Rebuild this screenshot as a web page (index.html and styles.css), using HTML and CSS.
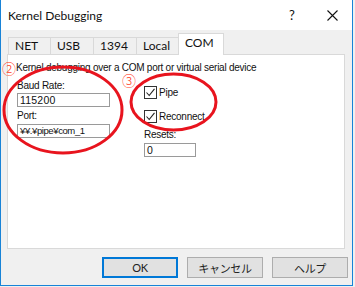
FILE: index.html
```html
<!DOCTYPE html>
<html lang="ja">
<head>
  <meta charset="UTF-8">
  <title>Kernel Debugging</title>
  <link rel="stylesheet" href="styles.css">
</head>
<body>
  <div class="window">
    <div class="titlebar">
      <span class="title">Kernel Debugging</span>
      <span class="cap-btn">?</span>
      <span class="cap-btn">
        <svg width="11" height="11" viewBox="0 0 11 11"><path d="M0.5 0.5 L10.5 10.5 M10.5 0.5 L0.5 10.5" stroke="#111" stroke-width="1.1" fill="none"/></svg>
      </span>
    </div>

    <div class="client">
      <div class="tabs">
        <div class="tab">NET</div>
        <div class="tab">USB</div>
        <div class="tab">1394</div>
        <div class="tab narrow">Local</div>
        <div class="tab active">COM</div>
      </div>

      <div class="panel">
        <p class="desc">Kernel debugging over a COM port or virtual serial device</p>
        <div class="fields">
          <div class="col col-left">
            <div class="label">Baud Rate:</div>
            <div class="edit">115200</div>
            <div class="label port">Port:</div>
            <div class="edit path">¥¥.¥pipe¥com_1</div>
          </div>
          <div class="col col-right">
            <div class="check">
              <span class="box"><svg width="11" height="11" viewBox="0 0 11 11"><path d="M1.5 5.5 L4.2 8.5 L9.5 1.8" stroke="#222" stroke-width="1.1" fill="none"/></svg></span>
              Pipe
            </div>
            <div class="check">
              <span class="box"><svg width="11" height="11" viewBox="0 0 11 11"><path d="M1.5 5.5 L4.2 8.5 L9.5 1.8" stroke="#222" stroke-width="1.1" fill="none"/></svg></span>
              Reconnect
            </div>
            <div class="label resets">Resets:</div>
            <div class="edit small">0</div>
          </div>
        </div>
      </div>

      <div class="buttons">
        <button class="btn default">OK</button>
        <button class="btn">キャンセル</button>
        <button class="btn">ヘルプ</button>
      </div>
    </div>

    <!-- hand drawn annotations -->
    <svg class="marks" width="353" height="286" viewBox="0 0 353 286">
      <ellipse cx="62" cy="110" rx="59" ry="43" fill="none" stroke="#e8141e" stroke-width="3"/>
      <ellipse cx="172.5" cy="102" rx="42.5" ry="28" fill="none" stroke="#e8141e" stroke-width="3"/>
    </svg>
    <span class="num num-2">②</span>
    <span class="num num-3">③</span>
  </div>
</body>
</html>
```

FILE: styles.css
```css
* {
  box-sizing: border-box;
}

body {
  margin: 0;
  background-color: #f0f0f0;
  font-family: 'Lato', sans-serif;
}

.window {
  position: relative;
  width: 353px;
  height: 286px;
  border: 1px solid #1883d7;
  border-top: none;
  background-color: #f0f0f0;
}

.titlebar {
  display: flex;
  align-items: center;
  height: 30px;
  padding-left: 7px;
  background-color: #ffffff;
  color: #111;
  font-size: 12px;
}

.title {
  flex: 1;
}

.cap-btn {
  display: flex;
  justify-content: center;
  align-items: center;
  width: 40px;
  height: 30px;
  font-size: 13px;
}

.client {
  height: 255px;
  padding-top: 3px;
}

.tabs {
  display: flex;
  align-items: flex-end;
  margin-left: 7px;
  height: 21px;
}

.tab {
  width: 43px;
  height: 17px;
  padding-left: 6px;
  border: 1px solid #d9d9d9;
  border-left: none;
  border-bottom: none;
  font-size: 12px;
  line-height: 16px;
  color: #111;
}

.tab:first-child {
  border-left: 1px solid #d9d9d9;
}

.tab.narrow {
  width: 42px;
}

.tab.active {
  position: relative;
  z-index: 1;
  width: 46px;
  height: 22px;
  margin-left: -1px;
  margin-bottom: -1px;
  border-left: 1px solid #d9d9d9;
  background-color: #ffffff;
  line-height: 17px;
}

.panel {
  width: 338px;
  height: 195px;
  margin-left: 6px;
  padding: 7px 0 0 8px;
  border: 1px solid #d9d9d9;
  background-color: #ffffff;
  font-family: 'Liberation Sans', sans-serif;
  font-size: 10px;
  letter-spacing: -0.25px;
  color: #111;
}

.desc {
  margin: 0;
  line-height: 12px;
}

.fields {
  display: flex;
  gap: 34px;
  margin-left: 1px;
}

.col-left {
  width: 93px;
  padding-top: 6px;
}

.col-right {
  padding-top: 12px;
}

.label {
  line-height: 12px;
  margin-bottom: 1px;
}

.label.port {
  margin-top: 3px;
  margin-bottom: 2px;
}

.edit {
  height: 14px;
  padding-left: 2px;
  border: 1px solid #9a9a9a;
  font-size: 10.5px;
  line-height: 12px;
  letter-spacing: 0.2px;
  white-space: nowrap;
  overflow: hidden;
}

.edit.path {
  font-size: 9.5px;
  letter-spacing: -0.4px;
}

.edit.small {
  width: 52px;
}

.check {
  display: flex;
  align-items: center;
  height: 13px;
  margin-bottom: 11px;
}

.box {
  display: flex;
  justify-content: center;
  align-items: center;
  width: 13px;
  height: 13px;
  margin-right: 2px;
  border: 1px solid #333;
}

.label.resets {
  margin-top: -5px;
  margin-bottom: 2px;
}

.buttons {
  display: flex;
  justify-content: flex-end;
  gap: 9px;
  margin-top: 8px;
  padding-right: 4px;
}

.btn {
  width: 76px;
  height: 21px;
  padding: 0;
  border: 1px solid #adadad;
  background-color: #e1e1e1;
  font-family: 'Lato', 'Noto Sans CJK JP', sans-serif;
  font-size: 11px;
  letter-spacing: -0.3px;
  color: #222;
}

.btn.default {
  border: 2px solid #0078d7;
}

.marks {
  position: absolute;
  top: 0;
  left: 0;
  pointer-events: none;
}

.num {
  position: absolute;
  font-family: 'Noto Sans CJK JP', sans-serif;
  font-size: 14px;
  line-height: 12px;
  font-weight: 300;
  color: #ff3c1e;
}

.num-2 {
  left: 1px;
  top: 62px;
}

.num-3 {
  left: 121px;
  top: 74px;
}
```
